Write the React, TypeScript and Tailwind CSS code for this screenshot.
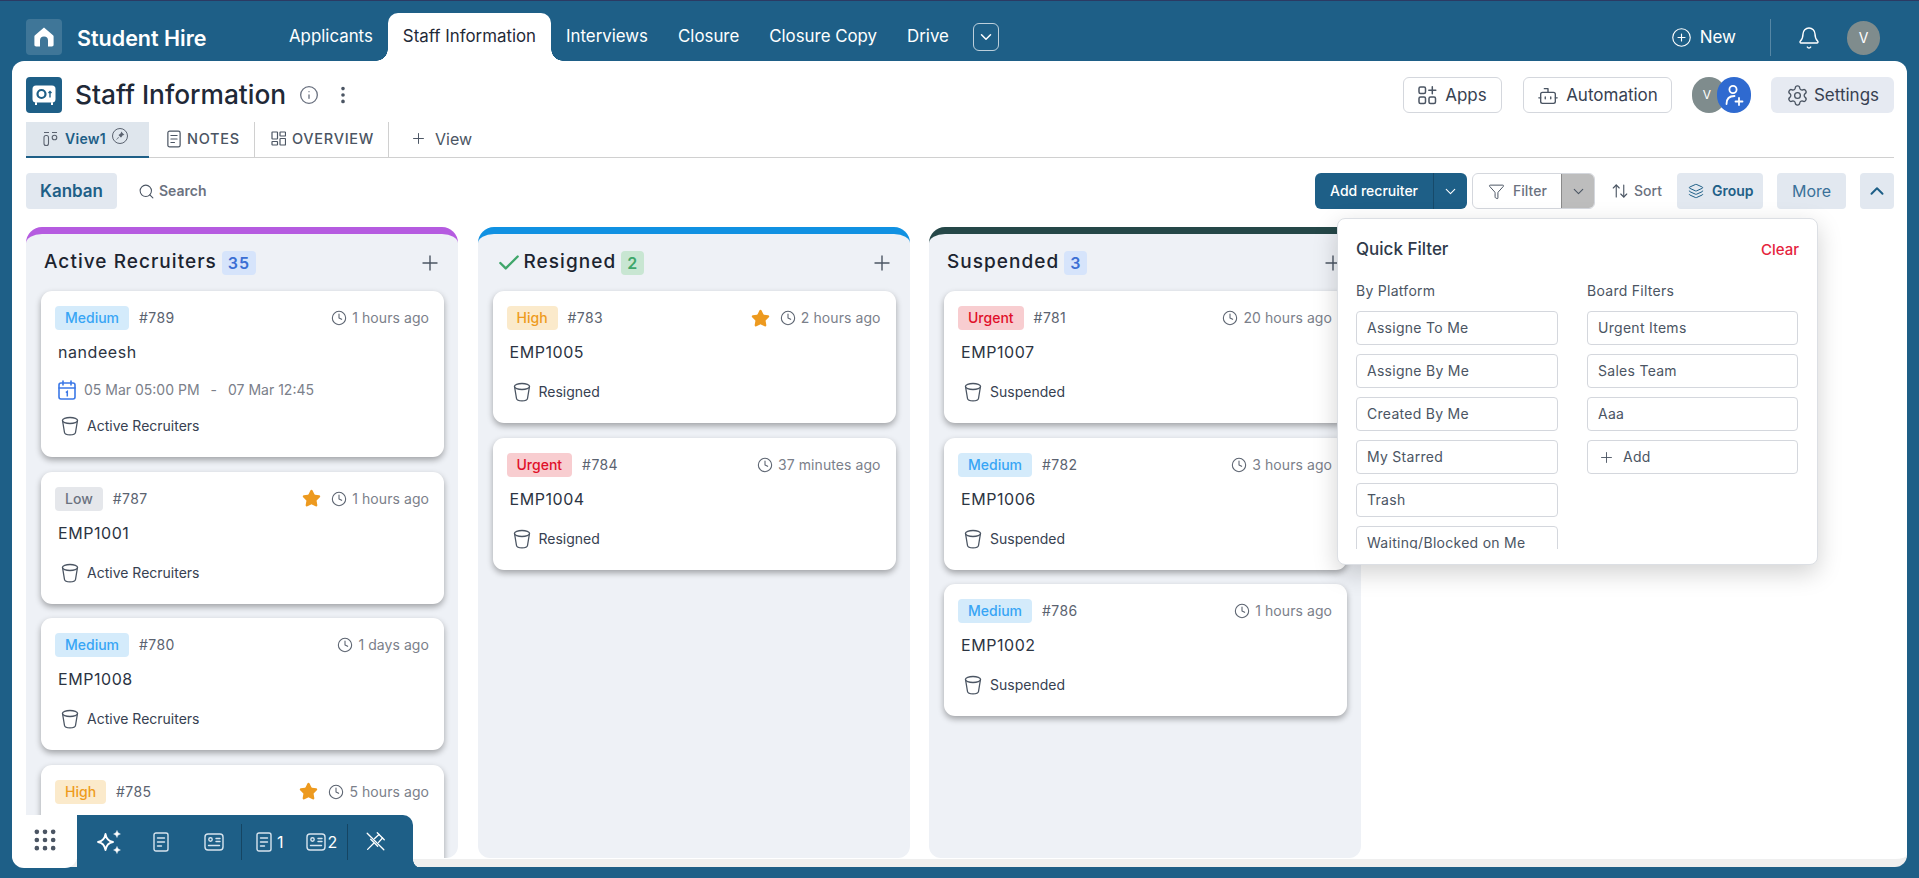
import { ArrowUpDown, Bell, Bot, Check, ChevronDown, ChevronUp, CirclePlus, Clock, EllipsisVertical, Funnel, Grip, Info, Layers, Plus, Search, Settings, Star } from "lucide-react";

type Priority = "Medium" | "Low" | "High" | "Urgent";

const badgeStyles: Record<Priority, string> = {
  Medium: "bg-[#d4ebfb] text-[#38a5f5]",
  Low: "bg-[#e5e7eb] text-[#6b7280]",
  High: "bg-[#fbeacb] text-[#ee9b1c]",
  Urgent: "bg-[#f8cdd0] text-[#e0102a]",
};

function Bucket() {
  return (
    <svg width="18" height="20" viewBox="0 0 18 20" fill="none" stroke="#4b5563" strokeWidth="1.3" className="shrink-0">
      <ellipse cx="9" cy="4.5" rx="7.6" ry="3" />
      <path d="M1.6 5l1.9 11.5c.2 1.3 2.6 2.3 5.5 2.3s5.300-1 5.500-2.300L16.400 5" strokeLinecap="round" />
    </svg>
  );
}

function CalendarIcon() {
  return (
    <svg width="18" height="20" viewBox="0 0 18 20" fill="none" stroke="#3b78e7" strokeWidth="1.6" className="shrink-0">
      <rect x="1" y="3" width="16" height="16" rx="2" />
      <path d="M1 8h16M5 1v4M13 1v4" strokeLinecap="round" />
      <path d="M7.800 12.500l1.500-1v5" strokeWidth="1.500" />
    </svg>
  );
}

function DocIcon({ className = "" }: { className?: string }) {
  return (
    <svg width="16" height="20" viewBox="0 0 16 20" fill="none" stroke="currentColor" strokeWidth="1.400" className={className}>
      <rect x="1" y="1" width="14" height="18" rx="2" />
      <path d="M4.500 6h7M4.500 10h7M4.500 14h4" strokeLinecap="round" />
    </svg>
  );
}

function CardIcon() {
  return (
    <svg width="20" height="18" viewBox="0 0 20 18" fill="none" stroke="currentColor" strokeWidth="1.400">
      <rect x="1" y="1" width="18" height="16" rx="3" />
      <circle cx="6.500" cy="6.500" r="1.700" />
      <path d="M12 5.500h4M12 8.500h4M4.500 12.500h11" strokeLinecap="round" />
    </svg>
  );
}

function Card({ priority, id, title, time, star, date, stage }: {
  priority: Priority;
  id: string;
  title?: string;
  time: string;
  star?: boolean;
  date?: boolean;
  stage?: string;
}) {
  return (
    <div className={`shrink-0 bg-white rounded-[11px] shadow-[0_3px_6px_rgba(0,0,0,0.33)] pt-[15px] pl-[14px] pr-[15px] ${date ? "h-[166px]" : "h-[132px]"}`}>
      <div className="flex items-center h-6">
        <span className={`h-6 px-2.5 rounded text-sm font-medium leading-6 ${badgeStyles[priority]}`}>{priority}</span>
        <span className="ml-2.5 text-sm tracking-[0.03em] text-[#5b6370]">{id}</span>
        <div className="ml-auto flex items-center text-sm tracking-[0.005em] text-[#7b808a]">
          {star && <Star size={19} fill="#ed9a1f" stroke="#ed9a1f" className="mr-2.5" />}
          <Clock size={16} stroke="#5b6370" strokeWidth={1.6} className="mr-[5px]" />
          {time}
        </div>
      </div>
      {title && <div className="mt-2.5 ml-[3px] h-6 text-base leading-6 tracking-[0.035em] text-[#2c3442]">{title}</div>}
      {date && (
        <div className="mt-4 ml-[3px] h-5 flex items-center text-sm text-[#7b808a]">
          <CalendarIcon />
          <span className="ml-2">05 Mar 05:00 PM</span>
          <span className="mx-[11px]">-</span>
          <span>07 Mar 12:45</span>
        </div>
      )}
      {stage && (
        <div className={`ml-[6px] h-5 flex items-center text-sm text-[#374151] ${date ? "mt-4" : "mt-[18px]"}`}>
          <Bucket />
          <span className="ml-2">{stage}</span>
        </div>
      )}
    </div>
  );
}

function Column({ title, count, bar, countClass, check, children }: {
  title: string;
  count: number;
  bar: string;
  countClass: string;
  check?: boolean;
  children: React.ReactNode;
}) {
  return (
    <div className={`w-[432px] shrink-0 h-full bg-[#eef1f6] rounded-t-[16px] rounded-b-[12px] border-t-[7px] pl-[15px] pr-[14px] overflow-hidden ${bar}`}>
      <div className="h-[57px] flex items-center pl-[3px]">
        {check && <Check size={26} stroke="#3fa66a" strokeWidth={2.2} className="mr-[2px]" />}
        <span className="text-[19px] font-medium tracking-[0.055em] text-[#1c2430]">{title}</span>
        <span className={`ml-[5px] h-6 px-[6px] rounded text-base leading-6 font-semibold tracking-[0.06em] ${countClass}`}>{count}</span>
        <Plus size={24} stroke="#4b5563" strokeWidth={1.4} className="ml-auto mr-[2px]" />
      </div>
      <div className="flex flex-col gap-[14.5px]">{children}</div>
    </div>
  );
}

const platforms = ["Assigne To Me", "Assigne By Me", "Created By Me", "My Starred", "Trash", "Waiting/Blocked on Me"];
const boards = ["Urgent Items", "Sales Team", "Aaa"];

function FilterRow({ children }: { children: React.ReactNode }) {
  return (
    <div className="h-[34px] shrink-0 flex items-center px-[10px] border border-[#d4d7dd] rounded text-sm tracking-[0.02em] text-[#4b5563]">{children}</div>
  );
}

export default function App() {
  return (
    <div className="relative h-[878px] overflow-hidden bg-[#1e5f87] border-t border-[#2b3a63] font-['Inter',sans-serif]">
      {/* Top bar */}
      <div className="h-[60px] flex items-end pl-[26px] pr-[39px]">
        <div className="self-start mt-[18px] w-9 h-9 rounded bg-white/15 flex items-center justify-center">
          <svg width="20" height="20" viewBox="0 0 20 20" fill="white">
            <path d="M10 0.500 1 8.200c-.4.300-.6.800-.6 1.300v8.300c0 1 .8 1.700 1.700 1.700h3.900v-6a4 4 0 0 1 8 0v6h3.900c1 0 1.700-.8 1.700-1.700V9.500c0-.5-.2-1-.6-1.300z" />
          </svg>
        </div>
        <span className="self-start mt-[21px] ml-[15px] w-[197px] text-[21.5px] font-semibold text-white">Student Hire</span>
        <nav className="flex items-end h-full text-[16.85px] text-white">
          <a className="px-[15px] h-[48px] leading-[46px]">Applicants</a>
          <a className="relative px-[15px] h-[48px] leading-[46px] bg-white text-[#1f2937] rounded-t-[10px]">
            Staff Information
            <span className="absolute right-full bottom-0 w-3 h-3 bg-[radial-gradient(circle_at_0_0,transparent_11.500px,white_12px)]" />
            <span className="absolute left-full bottom-0 w-3 h-3 bg-[radial-gradient(circle_at_100%_0,transparent_11.500px,white_12px)]" />
          </a>
          <a className="px-[15px] h-[48px] leading-[46px]">Interviews</a>
          <a className="px-[15px] h-[48px] leading-[46px]">Closure</a>
          <a className="px-[15px] h-[48px] leading-[46px]">Closure Copy</a>
          <a className="px-[15px] h-[48px] leading-[46px]">Drive</a>
          <button className="self-start mt-[22px] ml-[9px] w-[26px] h-7 rounded-md border border-white/70 flex items-center justify-center">
            <ChevronDown size={18} stroke="white" />
          </button>
        </nav>
        <div className="ml-auto self-start mt-[18px] flex items-center h-[37px] text-white">
          <CirclePlus size={21} strokeWidth={1.3} />
          <span className="ml-2 text-[17px]">New</span>
          <div className="ml-[34px] h-full w-px bg-white/25" />
          <Bell size={24} strokeWidth={1.4} className="ml-[26px]" />
          <div className="ml-[26px] w-[33px] h-[34px] rounded-full bg-[#7f8c8d] flex items-center justify-center text-sm">V</div>
        </div>
      </div>

      {/* Main panel */}
      <div className="relative mx-3 h-[806px] bg-white rounded-[12px] overflow-hidden pl-[14px] pr-[13px] pt-4 border-b-8 border-[#efefef]">
        {/* Page header */}
        <div className="flex items-center h-9">
          <div className="w-9 h-9 rounded bg-[#1e5f87] flex items-center justify-center">
            <svg width="24" height="20" viewBox="0 0 24 20" fill="none">
              <rect x="0.500" y="0.500" width="23" height="17" rx="3.500" fill="white" />
              <path d="M4 18v1.500M20 18v1.500" stroke="white" strokeWidth="2" strokeLinecap="round" />
              <circle cx="9.500" cy="9" r="4" stroke="#1e5f87" strokeWidth="2.200" />
              <path d="M18 6.500v6M16.500 8l1.500-1.500L19.500 8" stroke="#1e5f87" strokeWidth="1.400" />
            </svg>
          </div>
          <h1 className="ml-[13px] pb-px text-[26.3px] font-medium text-[#1f2937]">Staff Information</h1>
          <Info size={20} stroke="#6b7280" strokeWidth={1.6} className="ml-[13px]" />
          <EllipsisVertical size={22} stroke="#4b5563" className="ml-[13px]" />
          <div className="ml-auto flex items-center h-9">
            <button className="h-9 w-[99px] rounded-md border border-[#d4d7dd] flex items-center justify-center gap-2 pt-px text-[17px] text-[#374151]">
              <svg width="19" height="19" viewBox="0 0 19 19" fill="none" stroke="#4b5563" strokeWidth="1.500">
                <rect x="1" y="1" width="6.500" height="6.500" rx="1.500" />
                <rect x="1" y="11" width="6.500" height="6.500" rx="1.500" />
                <rect x="11" y="11" width="6.500" height="6.500" rx="1.500" />
                <path d="M14.300 0.800v7M10.800 4.300h7" strokeLinecap="round" />
              </svg>
              Apps
            </button>
            <button className="ml-[21px] h-9 w-[149px] rounded-md border border-[#d4d7dd] flex items-center justify-center gap-[7px] pt-px text-[17px] text-[#374151]">
              <Bot size={22} stroke="#4b5563" strokeWidth={1.5} />
              Automation
            </button>
            <div className="ml-5 flex items-center">
              <div className="w-[34px] h-9 rounded-full bg-[#7f8c8d] text-white text-xs flex items-center justify-center pr-1">V</div>
              <div className="-ml-[9px] w-[34px] h-9 rounded-full bg-[#2f6ad0] flex items-center justify-center">
                <svg width="20" height="24" viewBox="0 0 20 24" fill="none" stroke="white" strokeWidth="1.800" strokeLinecap="round">
                  <circle cx="9" cy="6.500" r="3.600" />
                  <path d="M2.500 21c0-5 3-8 8-8" />
                  <path d="M11.500 18.500h7M15 15v7" />
                </svg>
              </div>
            </div>
            <button className="ml-5 h-9 w-[123px] rounded-md bg-[#e6eaf2] flex items-center justify-center gap-[5px] pt-px text-[17px] text-[#374151]">
              <Settings size={23} stroke="#4b5563" strokeWidth={1.4} />
              Settings
            </button>
          </div>
        </div>

        {/* View tabs */}
        <div className="mt-[9px] h-[36px] flex items-stretch border-b border-[#d0d0d0]">
          <div className="w-[123px] h-[36px] flex items-center pl-[17px] bg-[#dfe6ed] border-b-2 border-[#1e5f87] text-sm font-semibold tracking-[0.02em] text-[#1e5f87]">
            <svg width="15" height="16" viewBox="0 0 15 16" fill="none" stroke="#5b6370" strokeWidth="1.100">
              <path d="M1 1.500h5M9 1.500h5" />
              <rect x="1" y="4.500" width="4.500" height="10" rx="2" />
              <circle cx="11.500" cy="6.500" r="2.300" />
            </svg>
            <span className="ml-[7px]">View1</span>
            <span className="ml-[6px] -mt-[7px] w-4 h-4 rounded-full border border-[#5b6370] flex items-center justify-center">
              <svg width="10" height="10" viewBox="0 0 9 9" fill="#5b6370"><path d="M5.500 0.500l3 3-1.500.3-1.500 2-.5-.2-1.500-1.500-.3-.5 2-1.500zM3 5.500l-2.500 3 3-2.500z" /></svg>
            </span>
          </div>
          <div className="w-[106px] flex items-center pl-[18px] pb-[2px] border-r border-[#d0d0d0] text-[14.5px] font-medium tracking-[0.05em] text-[#4b5563]">
            <DocIcon className="w-[14px] h-[18px]" />
            <span className="ml-[6px]">NOTES</span>
          </div>
          <div className="w-[134px] flex items-center pl-4 pb-[2px] border-r border-[#d0d0d0] text-[14.5px] font-medium tracking-[0.05em] text-[#4b5563]">
            <svg width="15" height="15" viewBox="0 0 15 15" fill="none" stroke="#4b5563" strokeWidth="1.200">
              <rect x="1" y="1" width="5.500" height="7" rx="0.500" />
              <rect x="9" y="1" width="5.500" height="4" rx="0.500" />
              <rect x="1" y="10.500" width="5.500" height="3.500" rx="0.500" />
              <rect x="9" y="7.500" width="5.500" height="6.500" rx="0.500" />
            </svg>
            <span className="ml-[6px]">OVERVIEW</span>
          </div>
          <div className="flex items-center pl-[21px] pb-[2px] text-base text-[#4b5563]">
            <Plus size={17} strokeWidth={1.4} />
            <span className="ml-2">View</span>
          </div>
        </div>

        {/* Toolbar */}
        <div className="mt-[15px] h-9 flex items-center text-sm">
          <button className="h-9 w-[91px] rounded bg-[#e2e8f0] text-[17px] font-semibold text-[#1e5f87]">Kanban</button>
          <Search size={17} stroke="#4b5563" strokeWidth={1.5} className="ml-[21px]" />
          <span className="ml-1 font-semibold text-[#6b7280]">Search</span>
          <div className="ml-auto flex items-center h-9">
            <div className="h-9 w-[152px] flex rounded-md bg-[#1e5f87] text-white">
              <span className="w-[119px] pl-[15px] leading-9 font-medium border-r border-[#174a6a]">Add recruiter</span>
              <span className="flex-1 flex items-center justify-center"><ChevronDown size={17} strokeWidth={1.5} /></span>
            </div>
            <div className="ml-[5px] h-9 w-[123px] flex rounded-md border border-[#d4d7dd] overflow-hidden text-[#6b7280] font-medium">
              <span className="w-[89px] flex items-center pl-[15px] gap-2 border-r border-[#8a8a8a]">
                <Funnel size={17} stroke="#4b5563" strokeWidth={1.4} />
                Filter
              </span>
              <span className="flex-1 bg-[#bdbdbd] flex items-center justify-center"><ChevronDown size={17} stroke="#4b5563" strokeWidth={1.5} /></span>
            </div>
            <ArrowUpDown size={18} stroke="#4b5563" strokeWidth={1.5} className="ml-4" />
            <span className="ml-[5px] font-medium text-[#6b7280]">Sort</span>
            <div className="ml-[15px] h-9 w-[86px] rounded bg-[#e2e8f0] flex items-center pl-[11px] gap-2 font-semibold text-[#1e5f87]">
              <Layers size={16} strokeWidth={1.5} />
              Group
            </div>
            <div className="ml-[14px] h-9 w-[69px] rounded bg-[#e2e8f0] flex items-center justify-center text-base text-[#3a7199]">More</div>
            <div className="ml-[14px] h-9 w-[34px] rounded bg-[#e2e8f0] flex items-center justify-center text-[#1e5f87]"><ChevronUp size={22} strokeWidth={2.2} /></div>
          </div>
        </div>

        {/* Board */}
        <div className="mt-[18px] h-[631px] flex gap-[19.5px]">
          <Column title="Active Recruiters" count={35} bar="border-[#b55be0]" countClass="bg-[#d6e4fb] text-[#3b6fd4]">
            <Card priority="Medium" id="#789" title="nandeesh" time="1 hours ago" date stage="Active Recruiters" />
            <Card priority="Low" id="#787" title="EMP1001" time="1 hours ago" star stage="Active Recruiters" />
            <Card priority="Medium" id="#780" title="EMP1008" time="1 days ago" stage="Active Recruiters" />
            <Card priority="High" id="#785" time="5 hours ago" star />
          </Column>
          <Column title="Resigned" count={2} bar="border-[#1091e2]" countClass="bg-[#c8e6d2] text-[#3fa66a]" check>
            <Card priority="High" id="#783" title="EMP1005" time="2 hours ago" star stage="Resigned" />
            <Card priority="Urgent" id="#784" title="EMP1004" time="37 minutes ago" stage="Resigned" />
          </Column>
          <Column title="Suspended" count={3} bar="border-[#254748]" countClass="bg-[#d6e4fb] text-[#3b6fd4]">
            <Card priority="Urgent" id="#781" title="EMP1007" time="20 hours ago" stage="Suspended" />
            <Card priority="Medium" id="#782" title="EMP1006" time="3 hours ago" stage="Suspended" />
            <Card priority="Medium" id="#786" title="EMP1002" time="1 hours ago" stage="Suspended" />
          </Column>
        </div>
      </div>

      {/* Quick filter popover */}
      <div className="absolute left-[1337px] top-[217px] w-[481px] h-[347px] bg-white rounded-lg border border-[#dcdfe4] shadow-[0_8px_24px_rgba(0,0,0,0.18)] pl-[18px] pr-[18px] pt-[19px]">
        <div className="flex items-center justify-between h-6">
          <span className="text-[17px] font-medium text-[#2f3a4a]">Quick Filter</span>
          <span className="text-[15px] font-medium text-[#e5233d]">Clear</span>
        </div>
        <div className="mt-[19px] flex gap-[29px]">
          <div className="w-[202px]">
            <div className="h-5 text-sm leading-5 tracking-[0.02em] text-[#4b5563]">By Platform</div>
            <div className="mt-[10px] h-[238px] flex flex-col gap-[9px] overflow-hidden">
              {platforms.map((p) => <FilterRow key={p}>{p}</FilterRow>)}
            </div>
          </div>
          <div className="w-[211px]">
            <div className="h-5 text-sm leading-5 tracking-[0.02em] text-[#4b5563]">Board Filters</div>
            <div className="mt-[10px] flex flex-col gap-[9px]">
              {boards.map((b) => <FilterRow key={b}>{b}</FilterRow>)}
              <FilterRow><Plus size={17} strokeWidth={1.3} className="mr-2" />Add</FilterRow>
            </div>
          </div>
        </div>
      </div>

      {/* Floating dock */}
      <div className="absolute left-3 top-[814px] h-[53px] flex">
        <div className="w-[65px] bg-white rounded-b-[12px] flex items-center justify-center pb-[3px] text-[#4b5563]">
          <Grip size={28} strokeWidth={2} />
        </div>
        <div className="relative w-[336px] bg-[#1e5f87] rounded-tr-[10px] flex items-center text-[#d7e4ee]">
          <svg width="24" height="24" viewBox="0 0 24 24" fill="none" stroke="white" strokeWidth="1.800" strokeLinejoin="round" className="ml-5 shrink-0">
            <path d="M8.500 4c.8 5 3 7.200 7.500 8-4.500.8-6.700 3-7.500 8-.8-5-3-7.200-7.500-8 4.500-.8 6.700-3 7.500-8z" />
            <path d="M20 .5c.4 2 1.400 3 3.400 3.500-2 .4-3 1.400-3.400 3.500-.4-2-1.400-3.100-3.400-3.500 2-.5 3-1.500 3.400-3.500zM20 16.500c.4 2 1.400 3 3.400 3.500-2 .4-3 1.400-3.400 3.500-.4-2-1.400-3.100-3.400-3.500 2-.5 3-1.500 3.400-3.500z" fill="white" strokeWidth="0.500" />
          </svg>
          <DocIcon className="ml-8" />
          <span className="ml-[35px]"><CardIcon /></span>
          <div className="ml-[17px] w-px h-9 bg-[#154563]" />
          <DocIcon className="ml-[14px]" />
          <span className="ml-[5px] text-base text-white">1</span>
          <span className="ml-[22px]"><CardIcon /></span>
          <span className="ml-[2px] text-base text-white">2</span>
          <div className="ml-[10px] w-px h-9 bg-[#154563]" />
          <svg width="21" height="21" viewBox="0 0 24 24" fill="none" stroke="white" strokeWidth="1.500" strokeLinecap="round" strokeLinejoin="round" className="ml-[17px] shrink-0">
            <path d="M14 2l8 8" />
            <path d="M16 4l-5 4.500M20 8l-4.500 5" />
            <path d="M6.500 9.500l8 8" />
            <path d="M10 14l-7 7" />
            <path d="M2.500 2.500l19 19" />
          </svg>
          <span className="absolute left-full bottom-0 w-2 h-2 bg-[radial-gradient(circle_at_100%_0,transparent_7.500px,#1e5f87_8px)]" />
        </div>
      </div>
    </div>
  );
}
